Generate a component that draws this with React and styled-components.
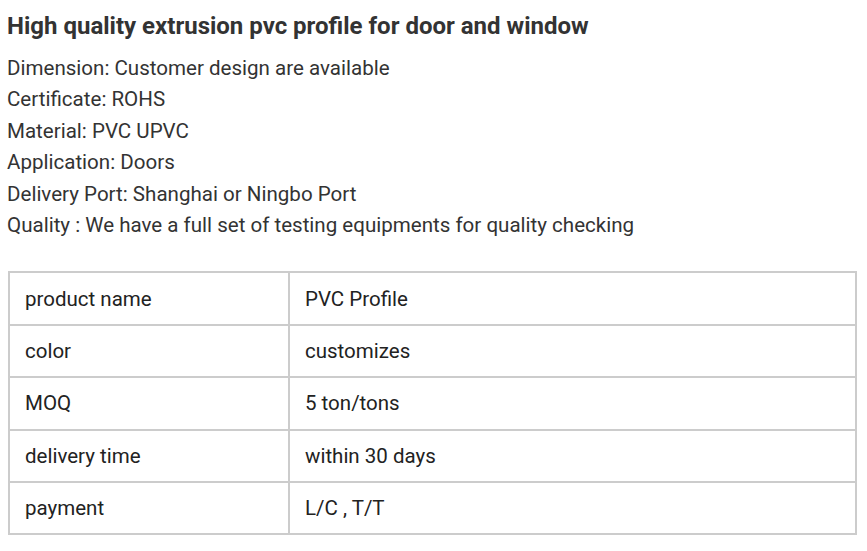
import styled, { createGlobalStyle } from "styled-components";

const Global = createGlobalStyle`
  html, body { margin: 0; padding: 0; background: #ffffff; }
  body { font-family: Roboto, "Liberation Sans", sans-serif; color: #333333; }
`;

const specs = [
  "Dimension: Customer design are available",
  "Certificate: ROHS",
  "Material: PVC UPVC",
  "Application: Doors",
  "Delivery Port: Shanghai or Ningbo Port",
  "Quality : We have a full set of testing equipments for quality checking",
];

const rows = [
  ["product name", "PVC Profile"],
  ["color", "customizes"],
  ["MOQ", "5 ton/tons"],
  ["delivery time", "within 30 days"],
  ["payment", "L/C , T/T"],
];

export default function App() {
  return (
    <Page>
      <Global />
      <Title>High quality extrusion pvc profile for door and window</Title>
      <SpecList>
        {specs.map((s) => (
          <SpecLine key={s}>{s}</SpecLine>
        ))}
      </SpecList>
      <Table>
        <tbody>
          {rows.map(([k, v]) => (
            <tr key={k}>
              <Cell $first>{k}</Cell>
              <Cell>{v}</Cell>
            </tr>
          ))}
        </tbody>
      </Table>
    </Page>
  );
}

const Page = styled.div`
  padding: 8px 11px 0 7px;
  width: 867px;
  box-sizing: border-box;
`;

const Title = styled.h1`
  margin: 0;
  font-size: 24px;
  font-weight: 700;
  line-height: 36px;
  color: #333333;
`;

const SpecList = styled.div`
  margin-top: 9px;
  display: flex;
  flex-direction: column;
`;

const SpecLine = styled.div`
  font-size: 20.55px;
  line-height: 31.4px;
`;

const Table = styled.table`
  margin-top: 30px;
  margin-left: 1px;
  width: 849px;
  border-collapse: collapse;
  border: 2px solid #cccccc;
`;

const Cell = styled.td`
  border: 2px solid #cccccc;
  height: 50.4px;
  padding: 0 15px;
  font-size: 20.5px;
  color: #222222;
  width: ${(p) => (p.$first ? "248px" : "auto")};
`;
